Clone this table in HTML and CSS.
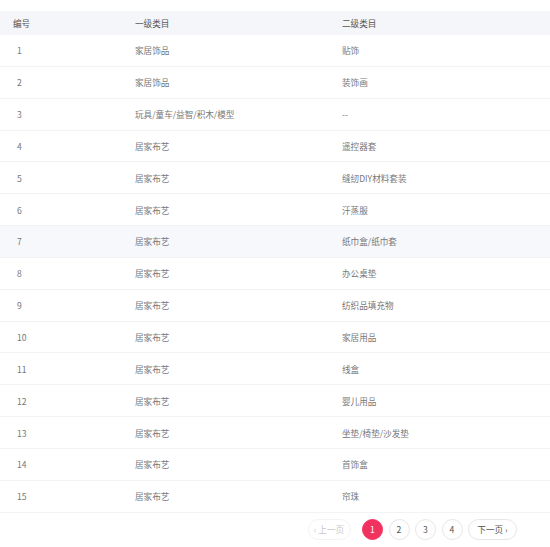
FILE: index.html
```html
<!DOCTYPE html>
<html lang="zh">
<head>
<meta charset="utf-8">
<link rel="stylesheet" href="styles.css">
</head>
<body>
<div class="page">
  <div class="table">
    <div class="row head"><div class="c1">编号</div><div class="c2">一级类目</div><div class="c3">二级类目</div></div>
    <div class="row"><div class="c1 num">1</div><div class="c2">家居饰品</div><div class="c3">贴饰</div></div>
    <div class="row"><div class="c1 num">2</div><div class="c2">家居饰品</div><div class="c3">装饰画</div></div>
    <div class="row"><div class="c1 num">3</div><div class="c2">玩具/童车/益智/积木/模型</div><div class="c3">--</div></div>
    <div class="row"><div class="c1 num">4</div><div class="c2">居家布艺</div><div class="c3">遥控器套</div></div>
    <div class="row"><div class="c1 num">5</div><div class="c2">居家布艺</div><div class="c3">缝纫DIY材料套装</div></div>
    <div class="row"><div class="c1 num">6</div><div class="c2">居家布艺</div><div class="c3">汗蒸服</div></div>
    <div class="row hover"><div class="c1 num">7</div><div class="c2">居家布艺</div><div class="c3">纸巾盒/纸巾套</div></div>
    <div class="row"><div class="c1 num">8</div><div class="c2">居家布艺</div><div class="c3">办公桌垫</div></div>
    <div class="row"><div class="c1 num">9</div><div class="c2">居家布艺</div><div class="c3">纺织品填充物</div></div>
    <div class="row"><div class="c1 num">10</div><div class="c2">居家布艺</div><div class="c3">家居用品</div></div>
    <div class="row"><div class="c1 num">11</div><div class="c2">居家布艺</div><div class="c3">线盒</div></div>
    <div class="row"><div class="c1 num">12</div><div class="c2">居家布艺</div><div class="c3">婴儿用品</div></div>
    <div class="row"><div class="c1 num">13</div><div class="c2">居家布艺</div><div class="c3">坐垫/椅垫/沙发垫</div></div>
    <div class="row"><div class="c1 num">14</div><div class="c2">居家布艺</div><div class="c3">首饰盒</div></div>
    <div class="row"><div class="c1 num">15</div><div class="c2">居家布艺</div><div class="c3">帘珠</div></div>
  </div>
  <div class="pager">
    <span class="btn text disabled">‹ 上一页</span>
    <span class="btn circle active">1</span>
    <span class="btn circle">2</span>
    <span class="btn circle">3</span>
    <span class="btn circle">4</span>
    <span class="btn text next">下一页 ›</span>
  </div>
</div>
</body>
</html>
```

FILE: styles.css
```css
html, body {
  margin: 0;
  padding: 0;
  background: #fff;
}
body {
  font-family: "Noto Sans CJK SC", "Noto Sans", sans-serif;
  font-size: 8.6px;
  color: #777;
}
.page {
  width: 550px;
  padding-top: 11px;
}
.table {
  display: flex;
  flex-direction: column;
}
.row {
  display: grid;
  grid-template-columns: 122px 207px 1fr;
  align-items: center;
  height: 31.85px;
  padding-left: 13px;
  border-bottom: 1px solid #f2f3f5;
  box-sizing: border-box;
  flex: none;
}
.row.head {
  height: 24px;
  background: #f5f6f9;
  color: #555;
  border-bottom: none;
}
.row.hover {
  background: #f7f8fc;
}
.num {
  padding-left: 4px;
}
.pager {
  display: flex;
  justify-content: flex-end;
  align-items: center;
  gap: 5.5px;
  padding-right: 33px;
  margin-top: 6px;
}
.btn {
  display: flex;
  align-items: center;
  justify-content: center;
  height: 21px;
  box-sizing: border-box;
  border: 1px solid #e6e6e6;
  border-radius: 11px;
  color: #555;
  font-size: 8.6px;
  white-space: nowrap;
  flex: none;
}
.btn.circle {
  width: 21px;
}
.btn.text {
  padding: 0;
}
.btn.next {
  width: 49px;
}
.btn.disabled {
  width: 43px;
  color: #c8c8c8;
  border-color: #f3f3f3;
  margin-right: 6px;
}
.btn.active {
  background: #f2325e;
  border-color: #f2325e;
  color: #fff;
}
```
